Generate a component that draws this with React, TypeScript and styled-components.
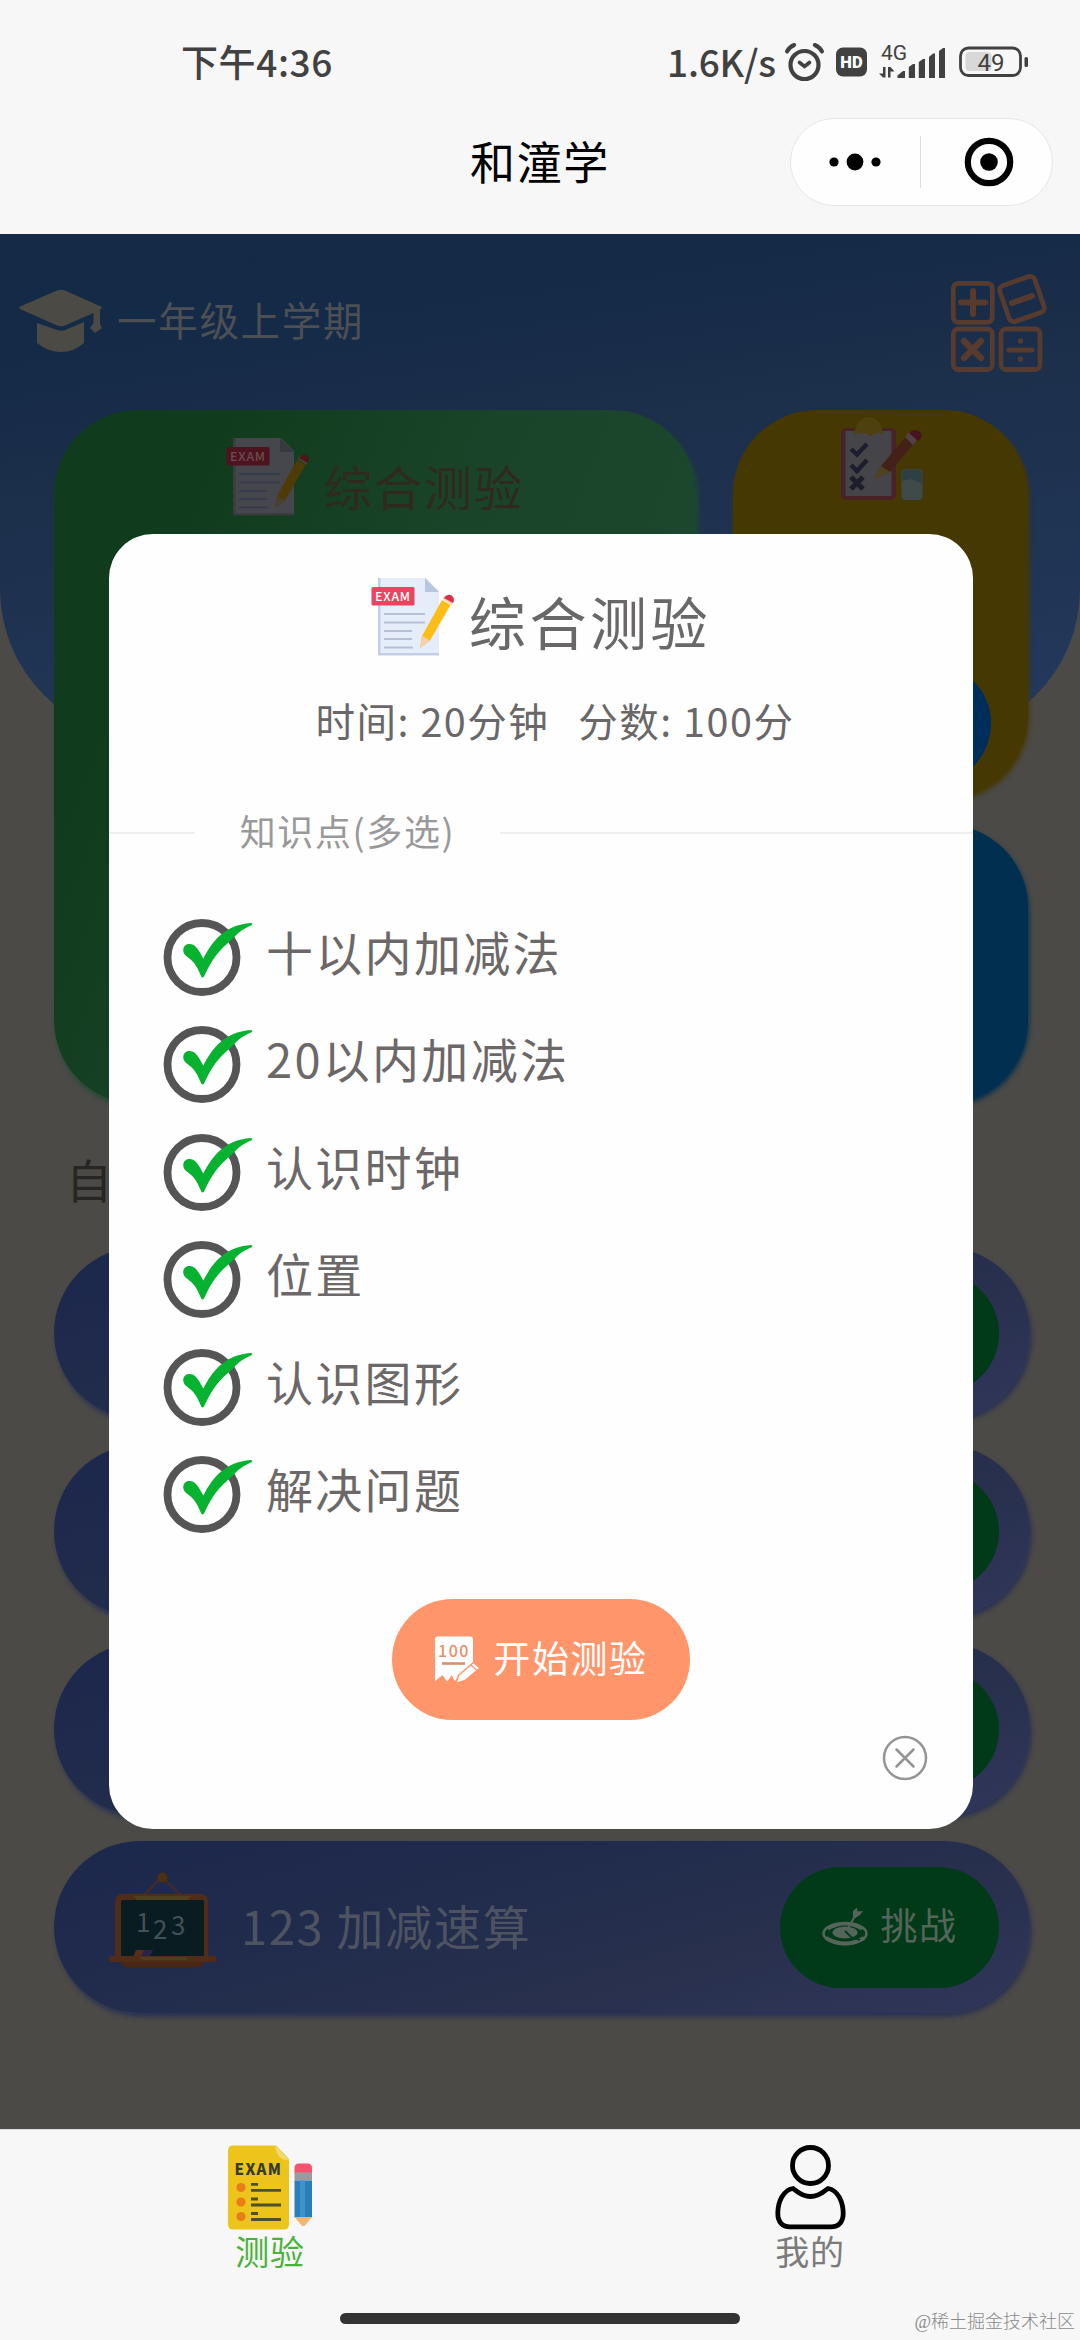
import React from "react";
import styled, { createGlobalStyle } from "styled-components";

const GlobalStyle = createGlobalStyle`
  *, *::before, *::after { box-sizing: border-box; }
  body {
    margin: 0;
    background: #f7f7f7;
    font-family: "Noto Sans CJK SC", "Noto Sans", sans-serif;
  }
  svg { display: block; flex: none; overflow: visible; }
`;

const Screen = styled.div`
  width: 1080px;
  height: 2340px;
  display: flex;
  flex-direction: column;
  overflow: hidden;
  background: #f7f7f7;
`;

/* Text centred next to an icon; $lift raises it above the icon's centre line. */
const Label = styled.span<{ $lift?: number }>`
  white-space: nowrap;
  padding-bottom: ${(p) => (p.$lift ?? 0) * 2}px;
`;

/* ---------- top ---------- */
const StatusBar = styled.div`
  height: 92px;
  padding: 32px 51px 0 181px;
  display: flex;
  align-items: center;
  justify-content: space-between;
  color: #414141;
  font-size: 37px;
  line-height: 54px;
  font-weight: 500;
`;

const Clock = styled(Label)`
  letter-spacing: 0.6px;
`;

const StatusIcons = styled.div`
  display: flex;
  align-items: center;
`;

const NetSpeed = styled(Label)`
  width: 118px;
  letter-spacing: -0.2px;
`;

const Gap = styled.i<{ $w: number }>`
  width: ${(p) => p.$w}px;
`;

const NavBar = styled.div`
  height: 142px;
  padding: 26px 28px 28px;
  display: grid;
  grid-template-columns: 262px 1fr 262px;
  align-items: center;
`;

const NavTitle = styled.h1`
  grid-column: 2;
  margin: 0;
  padding-bottom: 3px;
  text-align: center;
  font-size: 45px;
  line-height: 60px;
  font-weight: 400;
  letter-spacing: 1.7px;
  color: #000;
`;

const Capsule = styled.div`
  width: 263px;
  height: 88px;
  border-radius: 44px;
  border: 1px solid #e6e6e6;
  background: #fefefe;
  display: grid;
  grid-template-columns: 128px 1px 1fr;
  align-items: center;
  justify-items: center;
  padding-left: 1px;

  svg:first-child { margin-right: 3px; }
  svg:last-child { margin-left: 5px; }
`;

const CapsuleRule = styled.span`
  width: 1px;
  height: 52px;
  background: #dedede;
`;

/* ---------- dimmed page ---------- */
const Body = styled.main`
  position: relative;
  height: 1895px;
  flex: none;
  background: #4b4a47;
  overflow: hidden;
`;

const Sky = styled.div`
  position: absolute;
  inset: 0 0 auto;
  height: 505px;
  border-radius: 0 0 150px 150px;
  background: linear-gradient(172deg, #132b47 0%, #142a47 18%, #1c2f4b 42%, #243a5e 100%);
`;

const Page = styled.div`
  position: relative;
  display: flex;
  flex-direction: column;
`;

const GradeBar = styled.div`
  height: 176px;
  padding: 0 32px 0 19px;
  display: flex;
  align-items: center;
  justify-content: space-between;
`;

const Grade = styled.div`
  display: flex;
  align-items: center;
  gap: 14px;
  padding-bottom: 3px;
  font-size: 39.5px;
  letter-spacing: 1.7px;
  color: #4c4f54;
`;

const Cards = styled.section`
  display: grid;
  grid-template-columns: 642px 295px;
  grid-template-rows: 388px 280px;
  column-gap: 37px;
  row-gap: 26px;
  padding-left: 54px;
`;

const ExamCard = styled.div`
  grid-row: 1 / 3;
  border-radius: 84px;
  background: linear-gradient(112deg, #103b1c 18%, #1a4429 48%, #1d4a33 100%);
  box-shadow: 2px 4px 5px #1d4a33;
  padding-top: 23px;
  display: flex;
  justify-content: center;
  align-items: flex-start;
`;

const CardTitle = styled.div`
  display: flex;
  align-items: flex-start;
  gap: 14px;
  font-size: 48px;
  line-height: 90px;
  letter-spacing: 2px;
  color: #2f2a1f;

  span { padding-top: 7px; }
`;

const PracticeCard = styled.div`
  border-radius: 84px;
  background: #463803;
  box-shadow: 1px 4px 5px #463803;
  padding: 6px 37px 14px 0;
  display: flex;
  flex-direction: column;
  align-items: flex-end;
  justify-content: space-between;

  svg { margin-right: 67px; }
`;

const PillButton = styled.div<{ $color: string }>`
  width: 219px;
  height: 121px;
  border-radius: 61px;
  background: ${(p) => p.$color};
  display: flex;
  align-items: center;
  justify-content: center;
  gap: 12px;
  font-size: 37px;
  letter-spacing: 1.5px;
  color: #55655a;
`;

const BlueCard = styled.div`
  border-radius: 84px;
  background: #002f50;
  box-shadow: 1px 3px 5px #002f50;
`;

const SectionTitle = styled.h2`
  margin: 0;
  padding: 40px 0 0 66px;
  height: 143px;
  font-size: 46px;
  line-height: 68px;
  font-weight: 400;
  color: #272624;
`;

const Challenges = styled.section`
  display: flex;
  flex-direction: column;
  gap: 26px;
  padding: 0 50px 0 54px;
`;

const Challenge = styled.div`
  height: 172px;
  border-radius: 86px;
  padding: 0 31px 0 55px;
  display: flex;
  align-items: center;
  background: linear-gradient(165deg, #1b274c 0%, #222c4c 42%, #28304d 66%, #30365a 100%);
  box-shadow: 2px 4px 4px #2b3353;
`;

const BoardSlot = styled.span`
  padding-bottom: 15px;
`;

const ChallengeName = styled(Label)`
  flex: 1;
  padding-left: 24px;
  font-size: 47px;
  letter-spacing: 1.7px;
  color: #4d5360;
`;

/* ---------- dialog ---------- */
const Backdrop = styled.div`
  position: absolute;
  inset: 0;
  display: flex;
  align-items: center;
  justify-content: center;
  padding-left: 2px;
`;

const Dialog = styled.div`
  width: 864px;
  height: 1295px;
  border-radius: 44px;
  background: #fefefe;
  display: flex;
  flex-direction: column;
  padding-top: 39px;
`;

const DialogTitle = styled.div`
  display: flex;
  justify-content: center;
  gap: 14px;
  height: 101px;
  font-size: 57px;
  line-height: 94px;
  letter-spacing: 3.6px;
  color: #696767;
`;

const Facts = styled.div`
  display: flex;
  justify-content: center;
  gap: 29px;
  padding-left: 28px;
  height: 97px;
  font-size: 39.500px;
  line-height: 92px;
  letter-spacing: 1.5px;
  color: #696767;
`;

const Divider = styled.div`
  margin-top: 22px;
  height: 80px;
  display: grid;
  grid-template-columns: 86px 305px 1fr;
  align-items: center;
  font-size: 36px;
  letter-spacing: 1.6px;
  color: #999;
  text-align: center;

  &::before, &::after {
    content: "";
    height: 2px;
    background: #efefef;
  }
`;

const Topics = styled.ul`
  list-style: none;
  margin: 30px 0 0;
  padding: 0 0 0 54px;
`;

const Topic = styled.li`
  height: 107.5px;
  display: flex;
  align-items: center;
  gap: 13px;
  font-size: 47px;
  line-height: 70px;
  letter-spacing: 2.3px;
  color: #6c6868;
`;

const StartButton = styled.div`
  align-self: center;
  margin-top: 51px;
  width: 298px;
  height: 121px;
  border-radius: 61px;
  background: #ff966b;
  display: flex;
  align-items: center;
  justify-content: center;
  gap: 11px;
  font-size: 37px;
  letter-spacing: 1.6px;
  color: #fff;
`;

const CloseRow = styled.div`
  display: flex;
  justify-content: flex-end;
  padding: 15px 45px 0 0;
`;

/* ---------- bottom ---------- */
const TabBar = styled.nav`
  flex: 1;
  border-top: 1px solid #dcdcdc;
  padding-top: 15px;
  display: grid;
  grid-template-columns: 1fr 1fr;
  grid-template-rows: 150px 1fr;
`;

const Tab = styled.div<{ $active?: boolean }>`
  display: flex;
  flex-direction: column;
  align-items: center;
  font-size: 34px;
  line-height: 41px;
  letter-spacing: 0.8px;
  color: ${(p) => (p.$active ? "#48b33a" : "#7b7b7b")};
`;

const Footer = styled.div`
  grid-column: 1 / 3;
  display: grid;
  grid-template-columns: 1fr 400px 1fr;
  align-items: start;
`;

const HomeIndicator = styled.span`
  grid-column: 2;
  margin-top: 18px;
  height: 11px;
  border-radius: 6px;
  background: #333;
`;

const Watermark = styled.span`
  justify-self: end;
  margin: 14px 5px 0 0;
  font-family: "Liberation Serif", "Noto Sans CJK SC", serif;
  font-size: 18px;
  line-height: 26px;
  font-weight: 300;
  white-space: nowrap;
  color: #8a8a8a;
`;

/* ---------- icons ---------- */
const sansText = { fontFamily: '"Noto Sans CJK SC", sans-serif' };
const robotoText = { fontFamily: "Roboto, sans-serif" };

const AlarmIcon = () => (
  <svg width="39" height="40" viewBox="0 0 39 40" fill="none" stroke="#414141" strokeLinecap="round">
    <circle cx="19.5" cy="23" r="14" strokeWidth="4.200" />
    <path d="M2 9.500 C3.500 6.500 6.500 4 9.200 3 M37 9.500 C35.500 6.500 32.500 4 29.800 3" strokeWidth="4" />
    <path d="M14.500 20.500 L19.500 24.500 L24.500 20.500" strokeWidth="3.600" />
  </svg>
);

const HdIcon = () => (
  <svg width="31" height="30" viewBox="0 0 31 30">
    <rect y="0.500" width="31" height="29" rx="7" fill="#414141" />
    <text x="15.5" y="21" textAnchor="middle" fontSize="16.500" fontWeight="900" fill="#fff" style={robotoText}>HD</text>
  </svg>
);

const SignalIcon = () => (
  <svg width="68" height="40" viewBox="0 0 68 40" fill="#414141">
    <text x="2" y="18" fontSize="21" fontWeight="400" style={robotoText}>4G</text>
    <path d="M0 31.500 L4 31.500 L4 25 L6.500 25 L6.500 35.500 L4 35.500 Z M9 35.500 L9 25 L11.500 25 L15.500 29.500 L11.500 29.500 L11.500 35.500 Z" />
    <path d="M18.500 36 V33.500 L24 29 L26 29 V36 Z" />
    <path d="M29.800 36 V25 L34 22 H36 V36 Z" />
    <path d="M39.800 36 V20 L44 17 H46 V36 Z" />
    <path d="M50 36 V15 L54 11.500 H56 V36 Z" />
    <path d="M60 36 V9 L64 6 H66 V36 Z" />
  </svg>
);

const BatteryIcon = () => (
  <svg width="70" height="32" viewBox="0 0 70 32">
    <rect x="6.500" y="6" width="26" height="19" rx="4" fill="#d8d8d8" />
    <rect x="1.500" y="2" width="60" height="27.500" rx="8" fill="none" stroke="#414141" strokeWidth="2.800" />
    <rect x="65.500" y="11" width="3.500" height="10" rx="1.500" fill="#414141" />
    <text x="32" y="24.500" textAnchor="middle" fontSize="24" fontWeight="400" fill="#414141" style={robotoText}>49</text>
  </svg>
);

const DotsIcon = () => (
  <svg width="52" height="20" viewBox="0 0 52 20">
    <circle cx="5" cy="10" r="4.600" />
    <circle cx="26" cy="10" r="8.400" />
    <circle cx="47" cy="10" r="4.600" />
  </svg>
);

const TargetIcon = () => (
  <svg width="50" height="50" viewBox="0 0 50 50">
    <circle cx="25" cy="25" r="21.200" fill="none" stroke="#000" strokeWidth="6.200" />
    <circle cx="25" cy="25" r="8.800" />
  </svg>
);

const CapIcon = () => (
  <svg width="84" height="64" viewBox="0 0 84 64" fill="#4b4a45">
    <path d="M0 18 L38 1.500 Q42 0 46 1.500 L83 18 L81 21 L81 35 L83 39 L76 44 L71 39 L74.500 34 L74.500 24 L46 36.500 Q42 38 38 36.500 L1 20 Z" />
    <path d="M18 34 L38 41 Q42 42 46 41 L65 33 L65 54 Q55 63 42 63 Q29 63 18 54 Z" />
  </svg>
);

const MathIcon = () => (
  <svg width="97" height="96" viewBox="0 0 97 96" fill="none" stroke="#563b2e" strokeWidth="4.800" strokeLinecap="round">
    <rect x="2.300" y="9.300" width="39" height="39" rx="5" />
    <path d="M10 28.500 H34 M22 17 V40" strokeWidth="6" />
    <rect x="52.500" y="6" width="37" height="38" rx="5" transform="rotate(-19 71 25)" />
    <path d="M61 29 L81 22" strokeWidth="6" />
    <rect x="2.300" y="55" width="39" height="40.500" rx="5" />
    <path d="M13 67 L30 84 M30 67 L13 84" strokeWidth="6.500" />
    <rect x="50" y="55" width="39" height="40.500" rx="5" />
    <path d="M58 76 H81" strokeWidth="5" />
    <circle cx="69.500" cy="67" r="1.200" strokeWidth="3" />
    <circle cx="69.500" cy="85" r="1.200" strokeWidth="3" />
  </svg>
);

const ExamIcon = ({ dim = false }: { dim?: boolean }) => {
  const c = dim
    ? { paper: "#46474c", fold: "#36393f", line: "#363c4c", tag: "#4d1420", text: "#6d4b52", pencil: "#4e3b06", tip: "#4b4032", end: "#4e1418" }
    : { paper: "#e6edfa", fold: "#b9c6e0", line: "#b5bfd6", tag: "#eb4461", text: "#fff", pencil: "#fcbd18", tip: "#f3d0ae", end: "#d9304c" };
  return (
    <svg width="84" height="90" viewBox="0 0 84 90">
      <path d="M7 5 H55 L68 18 V82 H7 Z" fill={c.paper} />
      <path d="M7 5 H9.500 V80 H68 V82.500 H7 Z" fill={c.fold} opacity="0.8" />
      <path d="M54 5 L68 19 H54 Z" fill={c.fold} />
      <path d="M13 41 H54 M13 49.500 H54 M13 58 H41 M13 66 H41 M13 74.500 H42" stroke={c.line} strokeWidth="1.800" />
      <rect x="0.500" y="14" width="43" height="18.500" rx="1.500" fill={c.tag} />
      <text x="22" y="27.800" textAnchor="middle" fontSize="12.300" fontWeight="500" letterSpacing="0.800" fill={c.text} style={sansText}>EXAM</text>
      <path d="M51 63 L71 27 L79.500 32 L59 67.500 L49 75 Z" fill={c.pencil} />
      <path d="M51 63 L59 67.500 L49 75 Z" fill={c.tip} />
      <path d="M71.500 26 L74 22.500 L83 27.500 L80.500 32 Z" fill={c.tip} />
      <path d="M73 25 Q76 20.500 80 22 Q84.500 25 82 30 Z" fill={c.end} />
    </svg>
  );
};

const ClipboardIcon = () => (
  <svg width="84" height="86" viewBox="0 0 84 86" fill="none">
    <rect x="1" y="12" width="55" height="72" rx="5" fill="#472326" />
    <rect x="5.500" y="15" width="46" height="65" rx="1" fill="#454449" />
    <path d="M14 18 Q17 1 29 1 Q40 1 43 18 Q36 15 31 20 Q23 15 14 18 Z" fill="#4f400f" />
    <path d="M11 33 L17 38.500 L27 28 M11 49 L17 55 L27 44" stroke="#1c1d2d" strokeWidth="4.400" />
    <path d="M11 61 L23 73 M23 61 L11 73" stroke="#1c1d2d" strokeWidth="5" />
    <path d="M41 50 L69 17 L77 24 L50 56 L35 62 Z" fill="#432118" />
    <path d="M41 50 L50 56 L34 63 Z" fill="#4d441f" />
    <path d="M65 21 L69 16 L78 23 L73 29 Z" fill="#504245" />
    <path d="M69 17 Q73 12 79 15 Q85 20 78 25 Z" fill="#441520" />
    <rect x="61.500" y="53" width="21" height="31" rx="4" fill="#404a48" />
    <path d="M61.500 65 V59 Q62 53 68 53 H76 Q82 53 82.500 59 V68 L72 63 Z" fill="#2e4043" />
  </svg>
);

const BoardIcon = () => (
  <svg width="108" height="96" viewBox="0 0 108 96">
    <path d="M33 25 L53 5 L74 25" fill="none" stroke="#45292a" strokeWidth="2.400" />
    <circle cx="53.500" cy="5.500" r="5" fill="#4d3012" />
    <rect x="6" y="22" width="93" height="68" rx="7" fill="#512c19" />
    <path d="M25 24 H82 L78 29 H29 Z" fill="#514020" />
    <rect x="12" y="28" width="83" height="57" rx="2" fill="#081c21" />
    <g fill="#435155" fontSize="26" style={sansText}>
      <text x="27" y="60">1</text>
      <text x="44" y="67">2</text>
      <text x="62" y="63">3</text>
    </g>
    <path d="M27 78 H36 L32 85 H24 Z" fill="#54301a" />
    <path d="M35 78 H44 L41 84 H32 Z" fill="#2a2348" />
    <rect x="0" y="84" width="107" height="6" rx="2.500" fill="#512c19" />
    <path d="M11 90 H95 L91 95 H16 Z" fill="#4b2613" />
    <path d="M30 85 H78 V88 H34 Z" fill="#523d1e" />
  </svg>
);

const DartIcon = () => (
  <svg width="47" height="40" viewBox="0 0 47 40" fill="none" stroke="#55655a">
    <ellipse cx="23" cy="26.500" rx="21.500" ry="10.500" strokeWidth="2.600" />
    <path d="M4 31 Q23 42 42 31" strokeWidth="4" />
    <path d="M6 22 Q23 12 40 22" strokeWidth="3" />
    <ellipse cx="23" cy="25.500" rx="12.500" ry="6" fill="#55655a" stroke="none" />
    <path d="M24 25 L33 9" strokeWidth="2" />
    <path d="M31 11 L31 4 L35 0.500 L35.500 4.500 L41 4 L38 8 L33 11 Z" fill="#55655a" stroke="none" />
    <path d="M23 24 L29 30 L38 33" stroke="#013a19" strokeWidth="1.800" />
  </svg>
);

const CheckIcon = () => (
  <svg width="90" height="80" viewBox="0 0 90 80">
    <circle cx="39" cy="40.500" r="34.500" fill="none" stroke="#555" strokeWidth="7.800" />
    <path
      d="M20.200 33 C20.500 26 28.500 25.500 32 29 C36 33 38 37.500 40.300 41.500 C49 25 61 8 88 6 C90 6.300 89.500 7.800 88 8.500 C79 12 74 17 69 22.500 C56 33 49 42 41.500 58.500 C40.700 61 38.500 61 37.800 58.500 C33.500 48 30.500 44.500 24.500 40 C21.500 37.800 20.200 36 20.200 33 Z"
      fill="#06b22f"
    />
  </svg>
);

const PaperIcon = () => (
  <svg width="48" height="48" viewBox="0 0 48 48" fill="#fff">
    <path d="M3 0.500 H36 Q39 0.500 39 3.500 V27 L24 41.500 L20.500 45 L18 39 L13 45.500 L8.500 39 L1 45 V3 Q1 0.500 3 0.500 Z" />
    <text x="20" y="20.500" textAnchor="middle" fontSize="16" fontWeight="500" fill="#e88d66" style={sansText}>100</text>
    <path d="M8 27.500 H31" stroke="#d98e6c" strokeWidth="2.600" />
    <path d="M22 47.500 L24.500 39.500 L39.500 26.500 L46 32 L31 44.500 Z" stroke="#ff966b" strokeWidth="1.500" />
    <path d="M37 29 L43.500 35" stroke="#ff966b" strokeWidth="1.300" />
  </svg>
);

const CloseIcon = () => (
  <svg width="46" height="46" viewBox="0 0 46 46" fill="none" stroke="#949494" strokeWidth="2.500" strokeLinecap="round">
    <circle cx="23" cy="23" r="21" />
    <path d="M14.500 14.500 L31.500 31.500 M31.500 14.500 L14.500 31.500" />
  </svg>
);

const ExamTabIcon = () => (
  <svg width="84" height="85" viewBox="0 0 84 85">
    <path d="M5 0.500 H48 L61 14 V79 Q61 84.500 56 84.500 H5 Q0 84.500 0 79 V6 Q0 0.500 5 0.500 Z" fill="#edc41b" />
    <path d="M47 0.500 L61 15 Q49 16 47 0.500 Z" fill="#f3d873" />
    <text x="30.500" y="30" textAnchor="middle" fontSize="15" fontWeight="900" letterSpacing="1.400" fill="#343c2c" style={sansText}>EXAM</text>
    <g fill="#e97e16">
      <circle cx="13" cy="42.500" r="4.600" />
      <circle cx="13" cy="57" r="4.600" />
      <circle cx="13" cy="71.500" r="4.600" />
    </g>
    <path d="M23 39.300 H30 M23 45.300 H53 M23 54 H30 M23 60 H53 M23 68.500 H30 M23 74.500 H53" stroke="#4c5127" strokeWidth="2.800" />
    <path d="M66.500 26 V23 Q66.500 18.500 71 18.500 H79.500 Q84 18.500 84 23 V28 H66.500 Z" fill="#f8536c" />
    <rect x="66.500" y="27.500" width="17.500" height="8" fill="#9b9b9f" />
    <rect x="66.500" y="35.500" width="17.500" height="37" fill="#2b7fb9" />
    <rect x="72" y="35.500" width="5" height="37" fill="#3f93cd" />
    <path d="M66.500 72 H84 L76.500 81 H74 Z" fill="#f2b673" />
  </svg>
);

const PersonIcon = () => (
  <svg width="71" height="85" viewBox="0 0 71 85" fill="none" stroke="#000" strokeWidth="4.800" strokeLinejoin="round">
    <ellipse cx="35.500" cy="20.500" rx="18" ry="18" />
    <path d="M18 43.500 C8 45 3 57 2.800 68 C2.700 77 7.500 81.800 15 81.800 H56 C63.500 81.800 68.300 77 68.200 68 C68 57 63 45 53 43.500 C49 46 45 51.500 35.500 51.500 C26 51.500 22 46 18 43.500 Z" />
  </svg>
);

/* ---------- screen ---------- */
const topics = ["十以内加减法", "20以内加减法", "认识时钟", "位置", "认识图形", "解决问题"];

const ChallengeRow = ({ name }: { name?: string }) => (
  <Challenge>
    {name && (
      <BoardSlot>
        <BoardIcon />
      </BoardSlot>
    )}
    <ChallengeName $lift={3}>{name}</ChallengeName>
    <PillButton $color="#013a19">
      {name && <DartIcon />}
      {name && <Label $lift={3}>挑战</Label>}
    </PillButton>
  </Challenge>
);

export default function App() {
  return (
    <Screen>
      <GlobalStyle />
      <StatusBar>
        <Clock $lift={1.5}>下午4:36</Clock>
        <StatusIcons>
          <NetSpeed $lift={1.5}>1.6K/s</NetSpeed>
          <AlarmIcon />
          <Gap $w={12} />
          <HdIcon />
          <Gap $w={12} />
          <SignalIcon />
          <Gap $w={12} />
          <BatteryIcon />
        </StatusIcons>
      </StatusBar>
      <NavBar>
        <NavTitle>和潼学</NavTitle>
        <Capsule>
          <DotsIcon />
          <CapsuleRule />
          <TargetIcon />
        </Capsule>
      </NavBar>

      <Body>
        <Sky />
        <Page>
          <GradeBar>
            <Grade>
              <CapIcon />
              <Label $lift={2.5}>一年级上学期</Label>
            </Grade>
            <MathIcon />
          </GradeBar>
          <Cards>
            <ExamCard>
              <CardTitle>
                <ExamIcon dim />
                <span>综合测验</span>
              </CardTitle>
            </ExamCard>
            <PracticeCard>
              <ClipboardIcon />
              <PillButton $color="#002e5c" />
            </PracticeCard>
            <BlueCard />
          </Cards>
          <SectionTitle>自</SectionTitle>
          <Challenges>
            <ChallengeRow />
            <ChallengeRow />
            <ChallengeRow />
            <ChallengeRow name="123 加减速算" />
          </Challenges>
        </Page>

        <Backdrop>
          <Dialog>
            <DialogTitle>
              <ExamIcon />
              <span>综合测验</span>
            </DialogTitle>
            <Facts>
              <span>时间: 20分钟</span>
              <span>分数: 100分</span>
            </Facts>
            <Divider>
              <Label $lift={3}>知识点(多选)</Label>
            </Divider>
            <Topics>
              {topics.map((t) => (
                <Topic key={t}>
                  <CheckIcon />
                  <Label $lift={6}>{t}</Label>
                </Topic>
              ))}
            </Topics>
            <StartButton>
              <PaperIcon />
              <Label $lift={2.5}>开始测验</Label>
            </StartButton>
            <CloseRow>
              <CloseIcon />
            </CloseRow>
          </Dialog>
        </Backdrop>
      </Body>

      <TabBar>
        <Tab $active>
          <ExamTabIcon />
          测验
        </Tab>
        <Tab>
          <PersonIcon />
          我的
        </Tab>
        <Footer>
          <HomeIndicator />
          <Watermark>@稀土掘金技术社区</Watermark>
        </Footer>
      </TabBar>
    </Screen>
  );
}
